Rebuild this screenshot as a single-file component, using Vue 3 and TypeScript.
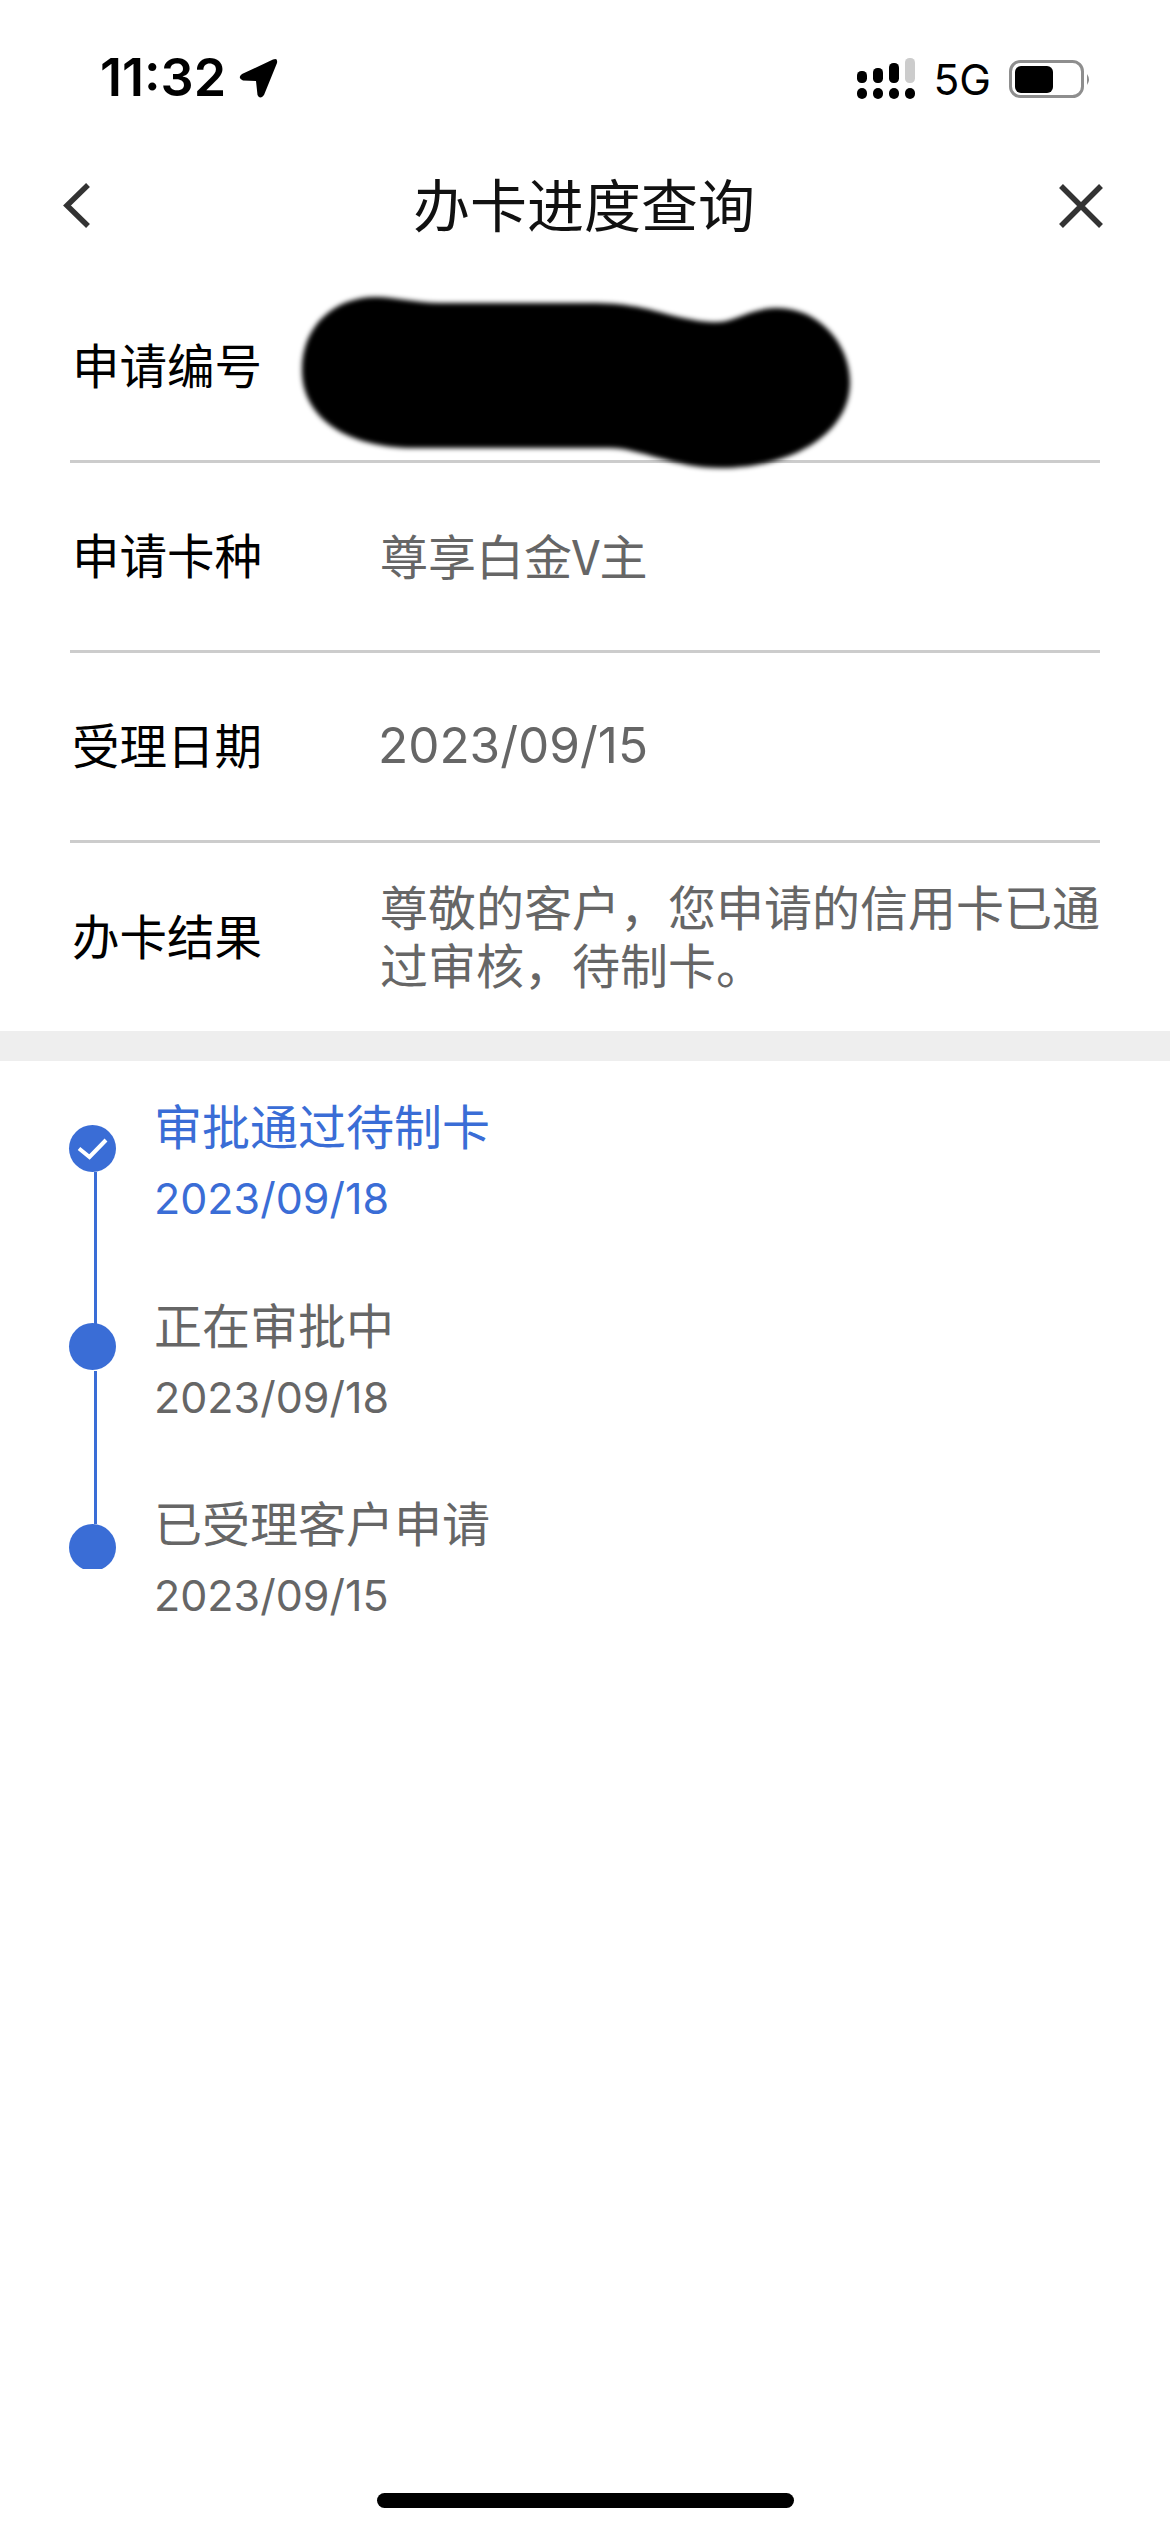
<script setup lang="ts">
interface Row { label: string; value: string; cls?: string }
const rows: Row[] = [
  { label: '申请卡种', value: '尊享白金V主' },
  { label: '受理日期', value: '2023/09/15', cls: 'num' },
]
interface Step { title: string; date: string; active?: boolean; check?: boolean }
const steps: Step[] = [
  { title: '审批通过待制卡', date: '2023/09/18', active: true, check: true },
  { title: '正在审批中', date: '2023/09/18' },
  { title: '已受理客户申请', date: '2023/09/15' },
]
</script>

<template>
  <div class="page">
    <div class="status">
      <div class="left">
        <span class="time">11:32</span>
        <svg class="arrow" width="39" height="40" viewBox="0 0 39 40">
          <path d="M3 16 L34 1.500 Q39 -0.500 38 5 L25 37 Q21 42 18.500 37 L17 23 L4 22.500 Q-2 20 3 16 Z" fill="#000" />
        </svg>
      </div>
      <div class="right">
        <svg class="signal" width="58" height="41" viewBox="0 0 58 41">
          <rect x="0" y="13" width="10" height="12" rx="4.500" fill="#000" />
          <rect x="16" y="10" width="10" height="15" rx="4.500" fill="#000" />
          <rect x="32" y="5" width="10" height="20" rx="4.500" fill="#000" />
          <rect x="48" y="0" width="10" height="25" rx="4.500" fill="#ccc" />
          <rect x="0" y="30" width="10" height="11" rx="5" fill="#000" />
          <rect x="16" y="30" width="10" height="11" rx="5" fill="#000" />
          <rect x="32" y="30" width="10" height="11" rx="5" fill="#000" />
          <rect x="48" y="30" width="10" height="11" rx="5" fill="#000" />
        </svg>
        <span class="net">5G</span>
        <svg class="battery" width="82" height="38" viewBox="0 0 82 38">
          <rect x="1.500" y="1.500" width="72" height="35" rx="10" fill="none" stroke="#8e8e8e" stroke-width="3" />
          <rect x="6" y="6" width="38" height="27" rx="6" fill="#000" />
          <path d="M78 14 Q82 19.500 78 25 Z" fill="#8e8e8e" />
        </svg>
      </div>
    </div>

    <div class="nav">
      <svg width="30" height="48" viewBox="0 0 30 48">
        <path d="M26 3 L5 23.500 L26 44" fill="none" stroke="#333" stroke-width="5.500" />
      </svg>
      <div class="nav-title">办卡进度查询</div>
      <svg class="close" width="46" height="46" viewBox="0 0 46 46">
        <path d="M3 3 L43 43 M43 3 L3 43" fill="none" stroke="#333" stroke-width="5.500" />
      </svg>
    </div>

    <div class="rows">
      <div class="row first">
        <div class="label">申请编号</div>
        <svg class="blob" width="576" height="190" viewBox="0 0 576 190">
          <defs>
            <filter id="soft" x="-5%" y="-10%" width="110%" height="120%">
              <feGaussianBlur stdDeviation="2.500" />
            </filter>
          </defs>
          <path filter="url(#soft)" fill="#000"
            d="M86 7 C105 7 125 13 150 13 L300 13 C335 13 355 18 373 23 C395 29 415 33 430 32 C445 31 462 18 487 18 C530 18 560 55 560 92 C560 145 500 178 430 178 C385 178 350 158 319 158 L124 158 C60 158 12 130 12 80 C12 35 45 7 86 7 Z" />
        </svg>
      </div>
      <div v-for="r in rows" :key="r.label" class="row">
        <div class="label">{{ r.label }}</div>
        <div class="value" :class="r.cls">{{ r.value }}</div>
      </div>
      <div class="row last">
        <div class="label">办卡结果</div>
        <div class="value multi">尊敬的客户，您申请的信用卡已通过审核，待制卡。</div>
      </div>
    </div>

    <div class="band"></div>

    <div class="timeline">
      <div v-for="(s, i) in steps" :key="s.title" class="step" :class="{ active: s.active }">
        <div class="rail" :class="{ end: i === steps.length - 1 }">
          <div class="dot">
            <svg v-if="s.check" width="47" height="47" viewBox="0 0 47 47">
              <path d="M10 23.500 L20.500 32 L37 15" fill="none" stroke="#fff" stroke-width="4" />
            </svg>
          </div>
          <div v-if="i < steps.length - 1" class="line"></div>
        </div>
        <div class="txt">
          <div class="title">{{ s.title }}</div>
          <div class="date">{{ s.date }}</div>
        </div>
      </div>
    </div>

    <div class="spacer"></div>
    <div class="home"></div>
  </div>
</template>

<style>
html, body { margin: 0; background: #fff; }
</style>

<style scoped>
.page {
  width: 1170px;
  height: 2532px;
  display: flex;
  flex-direction: column;
  background: #fff;
  font-family: "Noto Sans CJK SC", "Liberation Sans", sans-serif;
  overflow: hidden;
}
.status {
  height: 134px;
  padding: 56px 79px 0 100px;
  box-sizing: border-box;
  display: flex;
  justify-content: space-between;
  align-items: flex-start;
}
.left, .right { display: flex; align-items: center; }
.time {
  font: 600 52px/44px Inter, "Liberation Sans", sans-serif;
  color: #000;
}
.arrow { margin-left: 13px; }
.right { gap: 18px; }
.net { font: 400 42.500px/42px Inter, "Liberation Sans", sans-serif; color: #000; margin-top: 3px; }
.nav {
  height: 139px;
  box-sizing: border-box;
  padding: 5px 66px 0 62px;
  display: grid;
  grid-template-columns: 351px auto 1fr;
  align-items: center;
}
.nav-title { font-size: 57px; line-height: 70px; color: #111; margin-bottom: 8px; }
.close { justify-self: end; }
.rows { padding: 0 70px; }
.row {
  height: 187px;
  border-bottom: 3px solid #ccc;
  display: flex;
  align-items: center;
}
.row.first { position: relative; }
.row.last { height: 188px; border-bottom: none; }
.blob { position: absolute; left: 220px; top: 17px; }
.label { width: 310px; flex: none; font-size: 47.500px; color: #000; padding-left: 2px; box-sizing: border-box; margin-bottom: 6px; }
.value { font-size: 48px; color: #666; margin-bottom: 6px; }
.num { font-family: Inter, "Liberation Sans", sans-serif; font-size: 49.500px; margin-left: -2px; margin-bottom: 3px; }
.multi { line-height: 58px; }
.band { height: 30px; background: #eee; }
.timeline { padding: 33px 0 0 69px; }
.step { display: flex; height: 198.500px; }
.rail { width: 85px; flex: none; position: relative; padding-top: 31px; box-sizing: border-box; }
.step:nth-child(2) .rail { padding-top: 30.500px; }
.rail.end { height: 78px; padding-top: 33px; overflow: hidden; }
.dot {
  width: 47px; height: 47px; border-radius: 50%; background: #3a6dd6;
  display: flex;
}
.line { position: absolute; left: 25px; top: 78px; width: 3px; height: 153px; background: #3a6dd6; }
.title { font-size: 48px; line-height: 60px; color: #666; }
.date { font: 400 43px/60px Inter, "Liberation Sans", sans-serif; color: #666; margin-top: 14px; }
.active .title, .active .date { color: #3a6dd6; }
.spacer { flex: 1; }
.home { width: 417px; height: 15px; border-radius: 8px; background: #000; margin: 0 0 24px 377px; }
</style>
